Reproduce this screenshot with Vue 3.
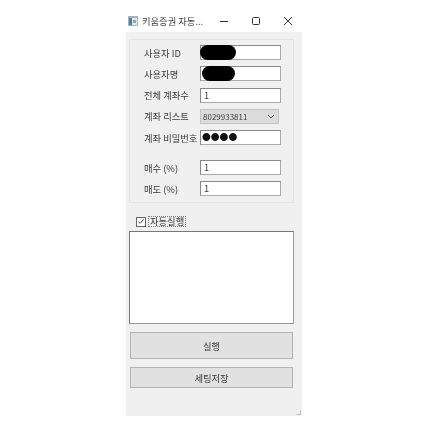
<script setup>
const fields = [
  { label: '사용자 ID', value: '', kind: 'input', blob: 'blob-id' },
  { label: '사용자명', value: '', kind: 'input', blob: 'blob-name' },
  { label: '전체 계좌수', value: '1', kind: 'input' },
  { label: '계좌 리스트', value: '8029933811', kind: 'select' },
  { label: '계좌 비밀번호', value: '●●●●', kind: 'password' },
  { label: '매수 (%)', value: '1', kind: 'input', spaced: true },
  { label: '매도 (%)', value: '1', kind: 'input' }
]
</script>

<template>
  <div class="page">
    <div class="window">
      <div class="titlebar">
        <svg class="app-icon" width="10" height="10" viewBox="0 0 10 10">
          <rect x="0" y="0" width="10" height="10" fill="#a9b3b8" />
          <rect x="1" y="2" width="3" height="7" fill="#4f7f9a" />
          <rect x="4" y="2" width="5" height="7" fill="#e3ebec" />
          <rect x="5" y="4" width="3" height="3" fill="#7fb09a" />
        </svg>
        <span class="title">키움증권 자동...</span>
        <div class="controls">
          <svg width="10" height="10" viewBox="0 0 10 10"><path d="M1 5.5H9" stroke="#333" fill="none" /></svg>
          <svg width="10" height="10" viewBox="0 0 10 10"><rect x="1.5" y="1.5" width="7" height="7" rx="1" stroke="#333" fill="none" /></svg>
          <svg width="10" height="10" viewBox="0 0 10 10"><path d="M1 1L9 9M9 1L1 9" stroke="#333" fill="none" /></svg>
        </div>
      </div>

      <div class="body">
        <div class="group">
          <div v-for="f in fields" :key="f.label" class="row" :class="{ spaced: f.spaced }">
            <span class="label">{{ f.label }}</span>
            <div v-if="f.kind === 'select'" class="select">
              <span>{{ f.value }}</span>
              <svg width="8" height="5" viewBox="0 0 8 5"><path d="M1 1L4 4L7 1" stroke="#555" fill="none" /></svg>
            </div>
            <div v-else class="input" :class="{ password: f.kind === 'password' }">
              {{ f.value }}
              <div v-if="f.blob" class="blob" :class="f.blob"></div>
            </div>
          </div>
        </div>

        <div class="auto">
          <span class="check">
            <svg width="9" height="9" viewBox="0 0 9 9"><path d="M1.5 4.5L3.5 6.5L7.5 2" stroke="#333" fill="none" /></svg>
          </span>
          <span class="auto-label">자동실행</span>
        </div>

        <div class="log"></div>

        <button class="btn run">실행</button>
        <button class="btn save">세팅저장</button>

        <svg class="grip" width="5" height="5" viewBox="0 0 5 5"><path d="M4.5 0.5V4.5H0.5" stroke="#bbb" fill="none" /></svg>
      </div>
    </div>
  </div>
</template>

<style scoped>
.page {
  width: 428px;
  height: 428px;
  padding: 10px 0 0 126px;
  box-sizing: border-box;
  background: #fff;
  font-family: "Noto Sans CJK KR", "Liberation Sans", sans-serif;
  font-size: 9.3px;
  color: #3a3a3a;
  filter: blur(0.3px);
}

.window {
  width: 176px;
}

.titlebar {
  display: flex;
  align-items: center;
  height: 22px;
  padding-left: 2px;
}

.title {
  margin-left: 4px;
  width: 73px;
  white-space: nowrap;
}

.controls {
  display: flex;
  gap: 22px;
  margin-left: 4px;
}

.body {
  position: relative;
  height: 384px;
  padding: 7px 8px 0 3px;
  box-sizing: border-box;
  background: #f0f0f0;
}

.group {
  height: 164px;
  padding: 5px 0 0 14px;
  box-sizing: border-box;
  border: 1px solid #e4e4e4;
}

.row {
  display: flex;
  align-items: center;
  height: 15px;
  margin-bottom: 6.3px;
}

.row.spaced {
  margin-top: 15px;
}

.label {
  width: 56px;
  flex: none;
  white-space: nowrap;
}

.input {
  position: relative;
  width: 81px;
  height: 15px;
  padding-left: 3px;
  box-sizing: border-box;
  border: 1px solid #aaa;
  border-top-color: #888;
  border-left-color: #888;
  background: #fff;
  line-height: 12px;
}

.input.password {
  font-size: 8.8px;
  color: #111;
  padding-left: 1px;
}

.blob {
  position: absolute;
  top: -1px;
  height: 15px;
  background: #000;
  border-radius: 8px;
}

.blob-id {
  left: -1px;
  width: 36px;
}

.blob-name {
  left: 1px;
  width: 33px;
}

.select {
  display: flex;
  align-items: center;
  justify-content: space-between;
  width: 79px;
  height: 15px;
  padding: 0 3px 0 2px;
  box-sizing: border-box;
  background: #dcdcdc;
  border: 1px solid #c4c4c4;
  font-size: 8px;
}

.auto {
  display: flex;
  align-items: center;
  margin: 13px 0 0 7px;
  height: 11px;
}

.check {
  display: flex;
  width: 10px;
  height: 10px;
  box-sizing: border-box;
  border: 1px solid #666;
  background: #fff;
  align-items: center;
  justify-content: center;
}

.auto-label {
  margin-left: 2px;
  padding: 0 1px;
  border: 1px dotted #777;
  line-height: 9px;
}

.log {
  height: 93px;
  margin-top: 4px;
  box-sizing: border-box;
  border: 1px solid #999;
  border-top-color: #777;
  border-left-color: #777;
  background: #fff;
}

.btn {
  display: block;
  width: 163px;
  margin-left: 1px;
  padding: 0;
  border: 1px solid #b4b4b4;
  background: #e1e1e1;
  font: inherit;
  color: #3a3a3a;
}

.run {
  height: 27px;
  margin-top: 8px;
}

.save {
  height: 21px;
  margin-top: 8px;
}

.grip {
  position: absolute;
  right: 1px;
  bottom: 1px;
}
</style>
